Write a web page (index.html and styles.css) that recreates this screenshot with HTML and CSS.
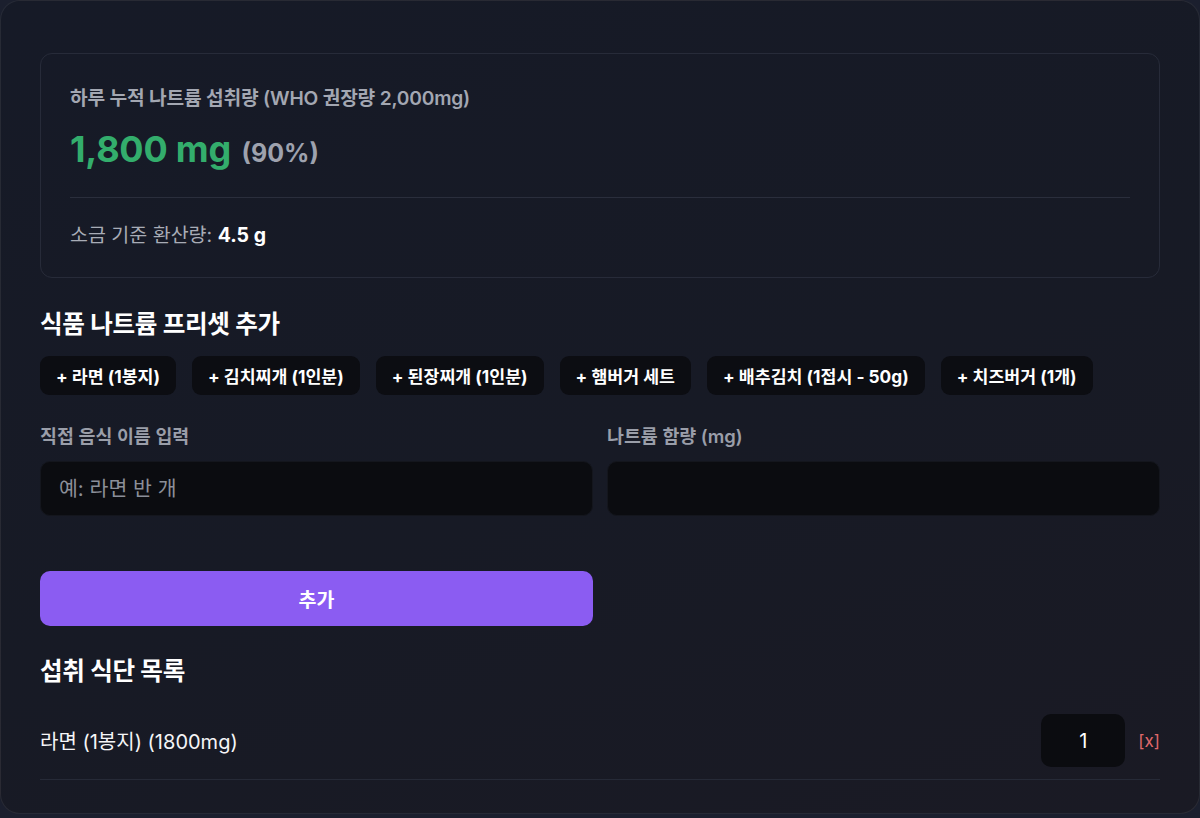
FILE: index.html
```html
<!DOCTYPE html>
<html lang="ko">
<head>
<meta charset="utf-8">
<title>나트륨 섭취량 계산기</title>
<link rel="stylesheet" href="styles.css">
</head>
<body>
<main class="card">
  <section class="summary">
    <p class="summary-title">하루 누적 나트륨 섭취량 (WHO 권장량 2,000mg)</p>
    <p class="summary-total"><span class="total-mg">1,800 mg</span> <span class="total-pct">(90%)</span></p>
    <div class="summary-salt">소금 기준 환산량: <strong>4.5 g</strong></div>
  </section>

  <h2 class="section-title">식품 나트륨 프리셋 추가</h2>
  <div class="presets">
    <button class="preset">+ 라면 (1봉지)</button>
    <button class="preset">+ 김치찌개 (1인분)</button>
    <button class="preset">+ 된장찌개 (1인분)</button>
    <button class="preset">+ 햄버거 세트</button>
    <button class="preset">+ 배추김치 (1접시 - 50g)</button>
    <button class="preset">+ 치즈버거 (1개)</button>
  </div>

  <form class="custom-form">
    <label class="field">
      <span class="field-label">직접 음식 이름 입력</span>
      <input class="field-input" type="text" placeholder="예: 라면 반 개">
    </label>
    <label class="field">
      <span class="field-label">나트륨 함량 (mg)</span>
      <input class="field-input" type="number">
    </label>
    <button class="add-btn" type="button">추가</button>
  </form>

  <h2 class="section-title list-title">섭취 식단 목록</h2>
  <ul class="meal-list">
    <li class="meal-row">
      <span class="meal-name">라면 (1봉지) (1800mg)</span>
      <div class="meal-actions">
        <input class="qty" type="number" value="1">
        <button class="remove">[x]</button>
      </div>
    </li>
  </ul>
</main>
</body>
</html>
```

FILE: styles.css
```css
* {
  box-sizing: border-box;
}

html, body {
  margin: 0;
  height: 100%;
}

body {
  background: #1b1f2e;
  font-family: "Inter", "Noto Sans CJK KR", sans-serif;
  color: #f3f4f6;
}

.card {
  height: 814px;
  padding: 52px 39px 0;
  border: 1px solid rgba(255, 255, 255, 0.07);
  border-radius: 20px;
  background: linear-gradient(160deg, #161a27 0%, #171a25 55%, #1a1a24 100%);
}

/* totals panel */
.summary {
  padding: 32px 29px 29px;
  border: 1px solid #272b39;
  border-radius: 12px;
}

.summary-title {
  margin: 0;
  font-size: 19.2px;
  line-height: 24px;
  font-weight: 600;
  color: #a3a7b2;
  letter-spacing: -0.2px;
}

.summary-total {
  margin: 17px 0 0;
  line-height: 44px;
  padding-bottom: 19px;
  border-bottom: 1px solid #2a2e3c;
}

.total-mg {
  font-size: 36px;
  font-weight: 700;
  color: #33ad6c;
  letter-spacing: -0.2px;
}

.total-pct {
  margin-left: 6px;
  font-size: 25px;
  font-weight: 700;
  color: #9ea2ae;
}

.summary-salt {
  margin-top: 24px;
  font-size: 19.5px;
  line-height: 26px;
  color: #a8acb6;
}

.summary-salt strong {
  color: #ffffff;
  font-weight: 700;
}

/* section headings */
.section-title {
  margin: 31px 0 0;
  font-size: 24.6px;
  line-height: 30px;
  font-weight: 700;
  color: #ffffff;
  letter-spacing: -0.3px;
}

/* preset chips */
.presets {
  display: flex;
  flex-wrap: wrap;
  gap: 16px;
  margin-top: 17px;
}

.preset {
  height: 39px;
  padding: 0 16px;
  border: none;
  border-radius: 9px;
  background: #0c0d12;
  color: #ffffff;
  font-family: inherit;
  font-size: 17.3px;
  font-weight: 700;
}

/* manual entry form */
.custom-form {
  display: grid;
  grid-template-columns: 1fr 1fr;
  column-gap: 14px;
  margin-top: 30px;
}

.field {
  display: flex;
  flex-direction: column;
  gap: 14px;
}

.field-label {
  font-size: 18.4px;
  line-height: 22px;
  font-weight: 600;
  color: #9a9ea9;
}

.field-input {
  height: 55px;
  padding: 0 18px;
  border: 1px solid #14161d;
  border-radius: 10px;
  background: #0b0c10;
  color: #ffffff;
  font-family: inherit;
  font-size: 20.5px;
  outline: none;
}

.field-input::placeholder {
  color: #8b8f99;
}

.add-btn {
  grid-column: 1;
  height: 55px;
  margin-top: 55px;
  border: none;
  border-radius: 10px;
  background: #8b5cf2;
  color: #ffffff;
  font-family: inherit;
  font-size: 19.5px;
  font-weight: 700;
}

.list-title {
  margin-top: 30px;
}

/* meal list */
.meal-list {
  list-style: none;
  margin: 0;
  padding: 0;
}

.meal-row {
  display: flex;
  align-items: center;
  justify-content: space-between;
  padding: 28px 0 12px;
  border-bottom: 1px solid #262a37;
}

.meal-name {
  font-size: 20px;
  color: #f5f5f7;
}

.meal-actions {
  display: flex;
  align-items: center;
  gap: 13px;
}

.qty {
  width: 84px;
  height: 53px;
  border: none;
  border-radius: 10px;
  background: #0b0c10;
  color: #ffffff;
  font-family: inherit;
  font-size: 20px;
  text-align: center;
  -moz-appearance: textfield;
}

.qty::-webkit-outer-spin-button,
.qty::-webkit-inner-spin-button {
  -webkit-appearance: none;
  margin: 0;
}

.remove {
  padding: 0;
  border: none;
  background: none;
  color: #e0696b;
  font-family: inherit;
  font-size: 17px;
}
```
